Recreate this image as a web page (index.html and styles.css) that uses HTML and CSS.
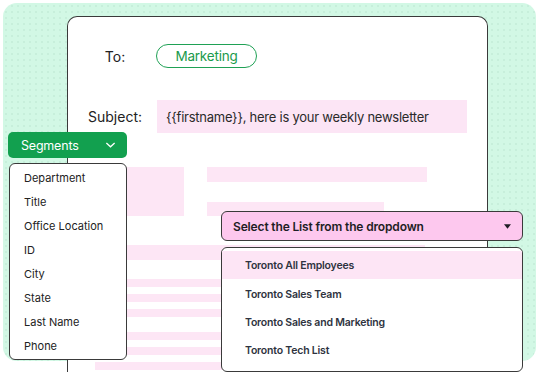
FILE: index.html
```html
<!DOCTYPE html>
<html lang="en">
<head>
    <meta charset="UTF-8">
    <meta name="viewport" content="width=device-width, initial-scale=1.0">
    <title>Newsletter segments</title>
    <link rel="stylesheet" href="styles.css">
</head>
<body>
    <div class="stage">
        <div class="panel">
            <div class="card">
                <div class="field-row">
                    <div class="field-label">To:</div>
                    <div class="pill">Marketing</div>
                </div>
                <div class="field-row subject-row">
                    <div class="field-label">Subject:</div>
                    <div class="subject-box">{{firstname}}, here is your weekly newsletter</div>
                </div>

                <!-- placeholder content -->
                <div class="sketch">
                    <div class="sketch-top">
                        <div class="ph ph-block"></div>
                        <div class="sketch-lines">
                            <div class="ph ph-b"></div>
                            <div class="ph ph-c"></div>
                        </div>
                    </div>
                    <div class="ph ph-wide"></div>
                    <div class="ph-group">
                        <div class="ph ph-thin"></div>
                        <div class="ph ph-thin"></div>
                        <div class="ph ph-thin"></div>
                    </div>
                    <div class="ph-group">
                        <div class="ph ph-thin"></div>
                        <div class="ph ph-thin"></div>
                        <div class="ph ph-thin"></div>
                    </div>
                </div>
            </div>
        </div>

        <div class="segments">
            <div class="segments-btn">
                <span>Segments</span>
                <svg viewBox="0 0 12 8"><path d="M1.5 1.8 6 6 10.5 1.8"/></svg>
            </div>
            <ul class="segments-list">
                <li>Department</li>
                <li>Title</li>
                <li>Office Location</li>
                <li>ID</li>
                <li>City</li>
                <li>State</li>
                <li>Last Name</li>
                <li>Phone</li>
            </ul>
        </div>

        <div class="list-select">
            <div class="select-box">
                <span>Select the List from the dropdown</span>
                <svg viewBox="0 0 8 5"><path d="M0 0h8L4 5z"/></svg>
            </div>
            <ul class="select-options">
                <li class="active">Toronto All Employees</li>
                <li>Toronto Sales Team</li>
                <li>Toronto Sales and Marketing</li>
                <li>Toronto Tech List</li>
            </ul>
        </div>
    </div>
</body>
</html>
```

FILE: styles.css
```css
* {
    margin: 0;
    padding: 0;
    box-sizing: border-box;
    font-family: 'Inter', 'Noto Sans', sans-serif;
}

body {
    background: #fff;
    width: 536px;
    height: 372px;
    overflow: hidden;
}

.stage {
    position: relative;
    width: 536px;
    height: 372px;
    padding: 3px 0 0 3px;
}

.panel {
    width: 533px;
    height: 358px;
    border-radius: 14px;
    background-color: #d2f8e5;
    background-image: radial-gradient(rgba(0, 80, 40, 0.05) 0.7px, transparent 1px);
    background-size: 6px 6px;
    padding: 13px 0 0 64px;
}

.card {
    width: 421px;
    height: 370px;
    background: #fff;
    border: 1px solid #3a3a3a;
    border-bottom: none;
    border-radius: 10px 10px 0 0;
    padding: 27px 0 0 12px;
}

.field-row {
    display: flex;
    align-items: center;
}

.field-label {
    width: 70px;
    text-align: center;
    font-size: 14px;
    color: #222;
    margin-right: 6px;
}

.pill {
    width: 101px;
    height: 24px;
    border: 1.5px solid #1fa155;
    border-radius: 12px;
    color: #1b9a4c;
    font-size: 13.5px;
    letter-spacing: -0.2px;
    display: flex;
    align-items: center;
    justify-content: center;
}

.subject-row {
    margin-top: 32px;
}

.subject-box {
    width: 310px;
    height: 33px;
    margin-left: 1px;
    background: #fce5f5;
    font-size: 13px;
    letter-spacing: -0.25px;
    color: #2a2a2a;
    padding-left: 9px;
    display: flex;
    align-items: center;
}

.sketch {
    margin: 34px 0 0 15px;
}

.ph {
    background: #fde6f5;
}

.sketch-top {
    display: flex;
}

.ph-block {
    width: 89px;
    height: 49px;
}

.sketch-lines {
    margin-left: 23px;
    display: flex;
    flex-direction: column;
    gap: 20px;
}

.ph-b {
    width: 220px;
    height: 15px;
}

.ph-c {
    width: 177px;
    height: 14px;
}

.ph-wide {
    margin-top: 29px;
    width: 330px;
    height: 15px;
}

.ph-group {
    margin-top: 19px;
    display: flex;
    flex-direction: column;
    gap: 7px;
}

.ph-group + .ph-group {
    margin-top: 15px;
}

.ph-thin {
    width: 330px;
    height: 8px;
}

/* Segments dropdown */
.segments {
    position: absolute;
    left: 8px;
    top: 132px;
    width: 119px;
}

.segments-btn {
    height: 26px;
    background: #12a04f;
    border-radius: 5px;
    color: #fff;
    font-size: 12.5px;
    letter-spacing: -0.2px;
    display: flex;
    align-items: center;
    justify-content: space-between;
    padding: 0 11px 0 13px;
}

.segments-btn svg {
    width: 11px;
    height: 8px;
    fill: none;
    stroke: #fff;
    stroke-width: 1.4;
}

.segments-list {
    list-style: none;
    margin: 5px 0 0 1px;
    height: 197px;
    background: #fff;
    border: 1px solid #3a3a3a;
    border-radius: 6px;
    padding: 2px 0;
}

.segments-list li {
    height: 24px;
    line-height: 24px;
    padding-left: 14px;
    font-size: 11px;
    color: #222;
}

/* List select */
.list-select {
    position: absolute;
    left: 221px;
    top: 211px;
    width: 302px;
}

.select-box {
    height: 30px;
    background: #fdc8ee;
    border: 1px solid #3a3a3a;
    border-radius: 6px;
    display: flex;
    align-items: center;
    justify-content: space-between;
    padding: 0 11px 0 11px;
    font-size: 12px;
    font-weight: 600;
    letter-spacing: -0.15px;
    color: #1e1e24;
}

.select-box svg {
    width: 7px;
    height: 5px;
    fill: #1e1e24;
}

.select-options {
    list-style: none;
    margin-top: 6px;
    height: 125px;
    background: #fff;
    border: 1px solid #3a3a3a;
    border-radius: 6px;
    padding-top: 3px;
}

.select-options li {
    height: 28px;
    line-height: 29px;
    padding-left: 23px;
    font-size: 10.5px;
    font-weight: 600;
    letter-spacing: -0.2px;
    color: #2e3340;
}

.select-options li + li {
    line-height: 31px;
}

.select-options li.active {
    background: #fde5f5;
}
```
